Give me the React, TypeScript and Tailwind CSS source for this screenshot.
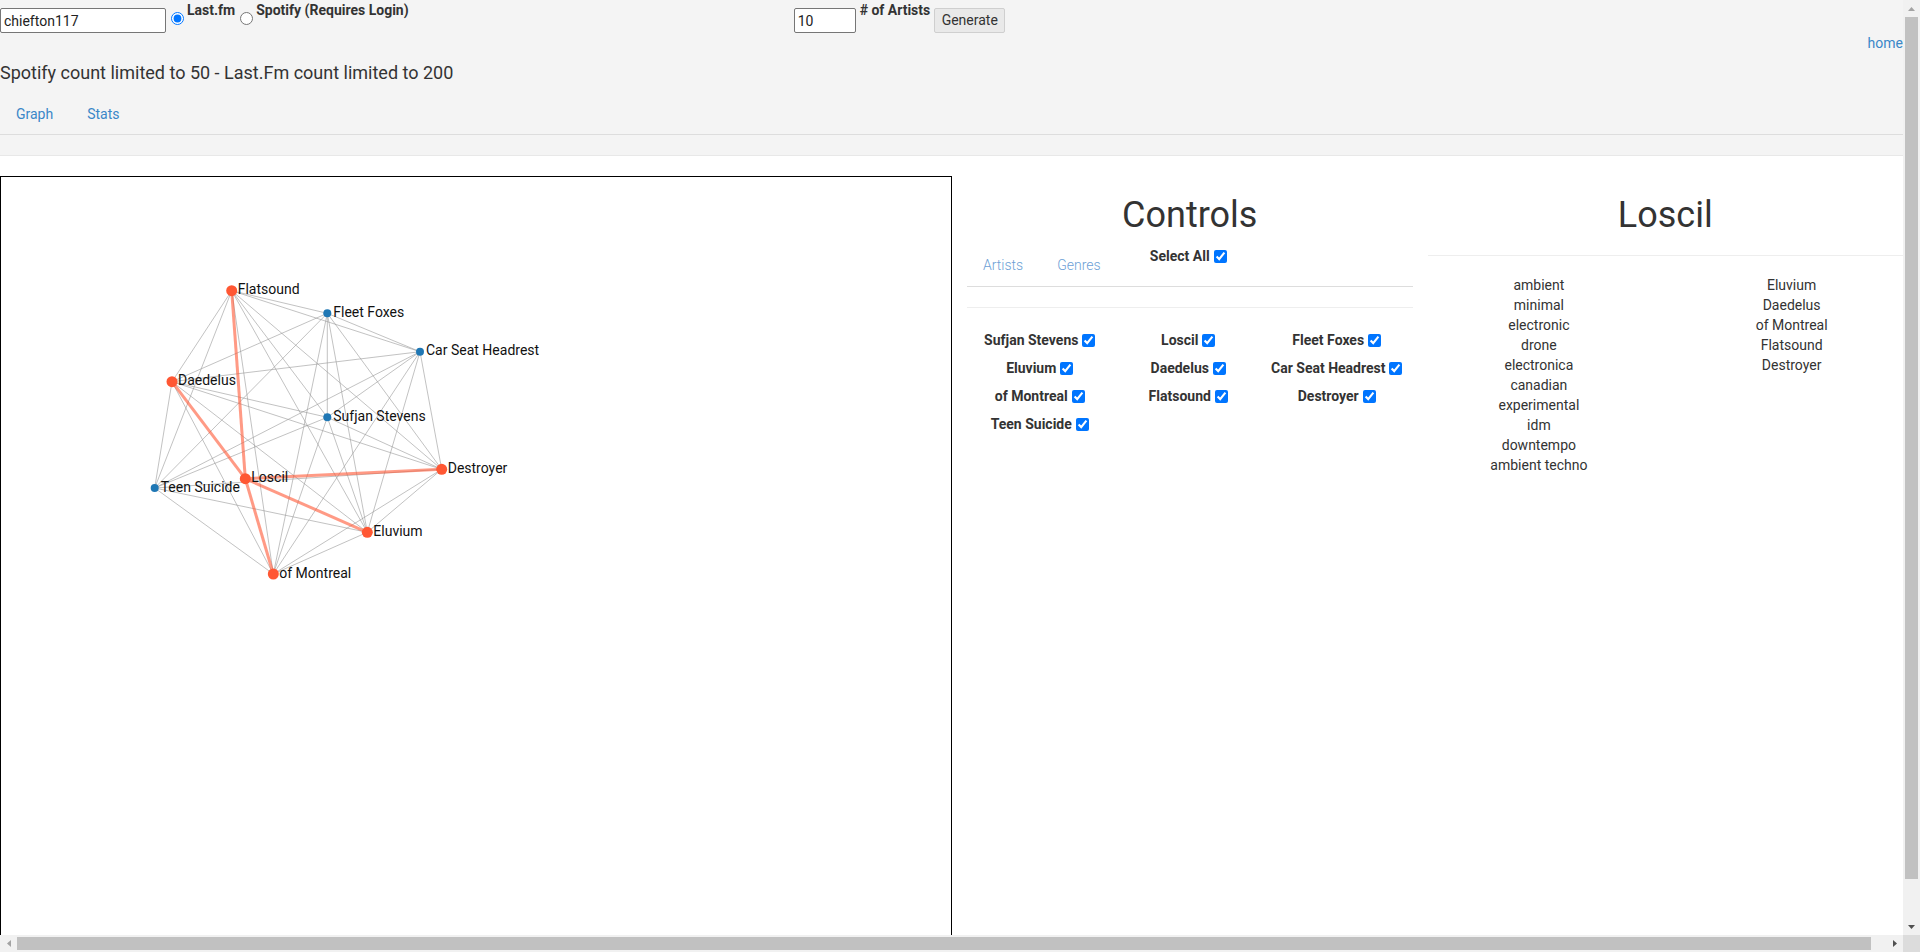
import React from 'react';

type Node = { id: string; x: number; y: number; hot?: boolean };

// positions in page coordinates (graph box is translated back below)
const nodes: Node[] = [
  { id: 'Flatsound', x: 231.7, y: 290.7, hot: true },
  { id: 'Fleet Foxes', x: 327.3, y: 313.3 },
  { id: 'Car Seat Headrest', x: 420, y: 351.7 },
  { id: 'Daedelus', x: 172, y: 381.7, hot: true },
  { id: 'Sufjan Stevens', x: 327.3, y: 417.3 },
  { id: 'Destroyer', x: 441.7, y: 469.3, hot: true },
  { id: 'Teen Suicide', x: 154.7, y: 488 },
  { id: 'Eluvium', x: 367.3, y: 532.3, hot: true },
  { id: 'of Montreal', x: 273.3, y: 574, hot: true },
  { id: 'Loscil', x: 245.3, y: 478.7, hot: true },
];

const loscil = nodes[nodes.length - 1];
const others = nodes.slice(0, -1);

const grayEdges: [Node, Node][] = [];
for (let i = 0; i < others.length; i++) {
  for (let j = i + 1; j < others.length; j++) {
    grayEdges.push([others[i], others[j]]);
  }
}
const redEdges = others.filter((n) => n.hot).map((n) => [loscil, n] as [Node, Node]);

const artistRows = [
  ['Sufjan Stevens', 'Loscil', 'Fleet Foxes'],
  ['Eluvium', 'Daedelus', 'Car Seat Headrest'],
  ['of Montreal', 'Flatsound', 'Destroyer'],
  ['Teen Suicide'],
];

const genres = ['ambient', 'minimal', 'electronic', 'drone', 'electronica', 'canadian', 'experimental', 'idm', 'downtempo', 'ambient techno'];
const similar = ['Eluvium', 'Daedelus', 'of Montreal', 'Flatsound', 'Destroyer'];

function Graph() {
  return (
    <svg width="950" height="818" className="block">
      <g transform="translate(-1,-177)">
        {grayEdges.map(([a, b], i) => (
          <line key={i} x1={a.x} y1={a.y} x2={b.x} y2={b.y} stroke="#999" strokeOpacity={0.6} strokeWidth={1} />
        ))}
        {redEdges.map(([a, b], i) => (
          <line key={'r' + i} x1={a.x} y1={a.y} x2={b.x} y2={b.y} stroke="#ff5733" strokeOpacity={0.6} strokeWidth={3} />
        ))}
        {nodes.map((n) => (
          <g key={n.id}>
            <circle cx={n.x} cy={n.y} r={n.hot ? 5.5 : 4} fill={n.hot ? '#ff5733' : '#1f77b4'} />
            <text x={n.x + 6} y={n.y + 3.5} fontSize="14" fill="#111" fontFamily="Roboto, sans-serif">
              {n.id}
            </text>
          </g>
        ))}
      </g>
    </svg>
  );
}

// little triangle for the scrollbar buttons
function Arrow({ dir, color }: { dir: 'up' | 'down' | 'left' | 'right'; color: string }) {
  const pts = {
    up: '0,4 3.5,0 7,4',
    down: '0,0 7,0 3.5,4',
    left: '4,0 4,7 0,3.5',
    right: '0,0 4,3.5 0,7',
  }[dir];
  const vertical = dir === 'up' || dir === 'down';
  return (
    <svg width={vertical ? 7 : 4} height={vertical ? 4 : 7}>
      <polygon points={pts} fill={color} />
    </svg>
  );
}

function Page() {
  return (
    <div className="font-[family-name:Roboto,sans-serif] text-[14px] text-[#333] bg-white">
      {/* top bar */}
      <div className="bg-[#f4f4f4] border-b border-[#e8e8e8]">
        <div className="flex items-start h-[33px]">
          <input
            type="text"
            defaultValue="chiefton117"
            className="mt-[8px] h-[25px] w-[166px] border border-[#767676] rounded-[2px] bg-white px-[3px] text-[14px] text-[#222]"
          />
          <input type="radio" name="src" defaultChecked className="mt-[12px] ml-[5px] mr-[3px] w-[13px] h-[13px]" />
          <label className="font-bold leading-[20px]">Last.fm</label>
          <input type="radio" name="src" className="mt-[12px] ml-[5px] mr-[3px] w-[13px] h-[13px]" />
          <label className="font-bold leading-[20px]">Spotify (Requires Login)</label>
          <input
            type="text"
            defaultValue="10"
            className="ml-[385px] mt-[8px] h-[25px] w-[62px] border border-[#767676] rounded-[2px] bg-white px-[3px] text-[14px] text-[#222]"
          />
          <label className="ml-[4px] font-bold leading-[20px]"># of Artists</label>
          <button className="ml-[4px] mt-[8px] h-[25px] w-[71px] bg-[#e9e9e9] border border-[#cfcfcf] rounded-[2px] text-[14px] text-[#333]">
            Generate
          </button>
        </div>
        <div className="text-right leading-[20px]">
          <a href="#" className="text-[#3a87c8]">home</a>
        </div>
        <h4 className="mt-[10px] mb-[10px] text-[18px] leading-[1.1] text-[#333] font-normal">
          Spotify count limited to 50 - Last.Fm count limited to 200
        </h4>
        <ul className="flex border-b border-[#ddd] mb-[20px]">
          <li>
            <a href="#" className="block px-[15px] py-[10px] leading-[20px] border border-transparent mr-[2px] -mb-px text-[#3a87c8]">Graph</a>
          </li>
          <li>
            <a href="#" className="block px-[15px] py-[10px] leading-[20px] border border-transparent mr-[2px] -mb-px text-[#3a87c8]">Stats</a>
          </li>
        </ul>
      </div>

      {/* main */}
      <div className="flex pt-[20px]">
        <div className="w-[952px] h-[820px] shrink-0 border border-black">
          <Graph />
        </div>

        <div className="flex-1 grid grid-cols-2">
          {/* controls */}
          <div className="px-[15px]">
            <h1 className="mt-[20px] mb-[10px] text-[36px] leading-[1.1] text-center font-normal">Controls</h1>
            <div className="grid grid-cols-3 items-start border-b border-[#ddd] h-[42px]">
              <div className="flex">
                <a href="#" className="block px-[15px] pt-[10px] pb-[11px] leading-[20px] border-x border-transparent mr-[2px] font-light text-[#6d9fd6]">Artists</a>
                <a href="#" className="block px-[15px] pt-[10px] pb-[11px] leading-[20px] border-x border-transparent mr-[2px] font-light text-[#6d9fd6]">Genres</a>
              </div>
              <div className="flex justify-center items-center pt-[1px] leading-[20px]">
                <span className="font-bold">Select All</span>
                <input type="checkbox" defaultChecked className="ml-[4px] mr-[3px] w-[13px] h-[13px]" />
              </div>
              <div />
            </div>
            <div className="mt-[20px] border-t border-[#eee]" />
            <div className="mt-[18px] grid grid-cols-3">
              {artistRows.flat().map((a) => (
                <div key={a} className="h-[28px] flex justify-center items-center">
                  <span className="font-bold leading-[20px]">{a}</span>
                  <input type="checkbox" defaultChecked className="ml-[4px] mr-[3px] w-[13px] h-[13px]" />
                </div>
              ))}
            </div>
          </div>

          {/* selected artist */}
          <div>
            <div className="pb-[20px] border-b border-[#eee]">
              <h1 className="mt-[20px] text-[36px] leading-[1.1] text-center font-normal">Loscil</h1>
            </div>
            <div className="-mx-[15px] mt-[19px] grid grid-cols-2">
              <ul className="text-center leading-[20px]">
                {genres.map((g) => (
                  <li key={g}>{g}</li>
                ))}
              </ul>
              <ul className="text-center leading-[20px]">
                {similar.map((s) => (
                  <li key={s}>{s}</li>
                ))}
              </ul>
            </div>
          </div>
        </div>
      </div>
    </div>
  );
}

export default function App() {
  return (
    <div className="h-screen flex flex-col overflow-hidden">
      <div className="flex flex-1 min-h-0">
        <div className="flex-1 min-w-0 overflow-hidden">
          <Page />
        </div>
        {/* vertical scrollbar */}
        <div className="w-[17px] shrink-0 bg-[#f1f1f1] flex flex-col">
          <div className="h-[17px] flex items-center justify-center">
            <Arrow dir="up" color="#a3a3a3" />
          </div>
          <div className="flex-1 flex flex-col">
            <div className="h-[862px] mx-[2px] bg-[#c1c1c1]" />
          </div>
          <div className="h-[17px] flex items-center justify-center">
            <Arrow dir="down" color="#505050" />
          </div>
        </div>
      </div>
      {/* horizontal scrollbar */}
      <div className="h-[17px] shrink-0 flex">
        <div className="flex-1 flex bg-[#f1f1f1]">
          <div className="w-[17px] flex items-center justify-center">
            <Arrow dir="left" color="#a3a3a3" />
          </div>
          <div className="flex-1 flex items-center">
            <div className="w-[1854px] h-[13px] bg-[#c1c1c1]" />
          </div>
          <div className="w-[17px] flex items-center justify-center">
            <Arrow dir="right" color="#505050" />
          </div>
        </div>
        <div className="w-[17px] bg-[#dcdcdc]" />
      </div>
    </div>
  );
}
